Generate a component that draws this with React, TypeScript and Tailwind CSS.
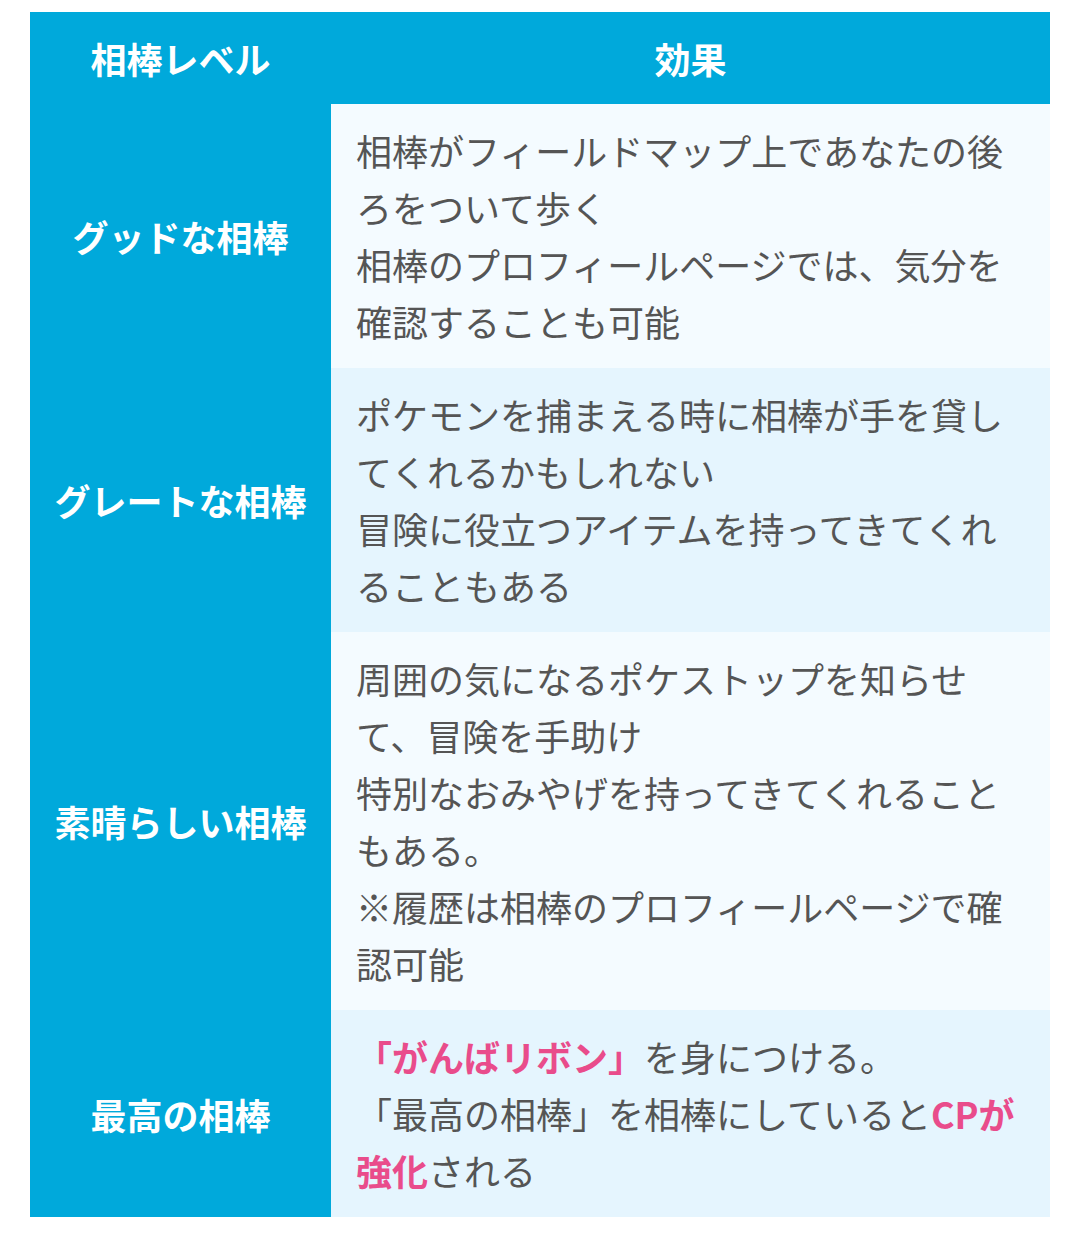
import type { ReactNode } from "react";

type Row = {
  level: string;
  effect: ReactNode;
};

const Em = ({ children }: { children: ReactNode }) => (
  <span className="font-bold text-[#e94c8b]">{children}</span>
);

const rows: Row[] = [
  {
    level: "グッドな相棒",
    effect: (
      <>
        相棒がフィールドマップ上であなたの後ろをついて歩く
        <br />
        相棒のプロフィールページでは、気分を確認することも可能
      </>
    ),
  },
  {
    level: "グレートな相棒",
    effect: (
      <>
        ポケモンを捕まえる時に相棒が手を貸してくれるかもしれない
        <br />
        冒険に役立つアイテムを持ってきてくれることもある
      </>
    ),
  },
  {
    level: "素晴らしい相棒",
    effect: (
      <>
        周囲の気になるポケストップを知らせて、冒険を手助け
        <br />
        特別なおみやげを持ってきてくれることもある。
        <br />
        ※履歴は相棒のプロフィールページで確認可能
      </>
    ),
  },
  {
    level: "最高の相棒",
    effect: (
      <>
        <Em>「がんばリボン」</Em>を身につける。
        <br />
        「最高の相棒」を相棒にしていると<Em>CPが強化</Em>される
      </>
    ),
  },
];

export default function App() {
  return (
    <div className="min-h-[1237px] bg-white pt-[12px] font-['Noto_Sans_CJK_JP','Noto_Sans',sans-serif]">
      <div className="mx-[30px] w-[1020px] bg-[#00a9db]">
        <div className="grid h-[92px] grid-cols-[301px_1fr] items-center text-[36px] font-bold text-white">
          <div className="text-center">相棒レベル</div>
          <div className="text-center">効果</div>
        </div>
        {rows.map((row, i) => (
          <div key={row.level} className="grid grid-cols-[301px_1fr]">
            <div className="flex items-center justify-center text-[36px] font-bold text-white">
              {row.level}
            </div>
            <div
              className={`py-[18px] pl-[25px] pr-[34px] text-[36px] leading-[57px] text-[#555555] ${
                i % 2 === 0 ? "bg-[#f4fbff]" : "bg-[#e5f5fe]"
              }`}
            >
              {row.effect}
            </div>
          </div>
        ))}
      </div>
    </div>
  );
}
